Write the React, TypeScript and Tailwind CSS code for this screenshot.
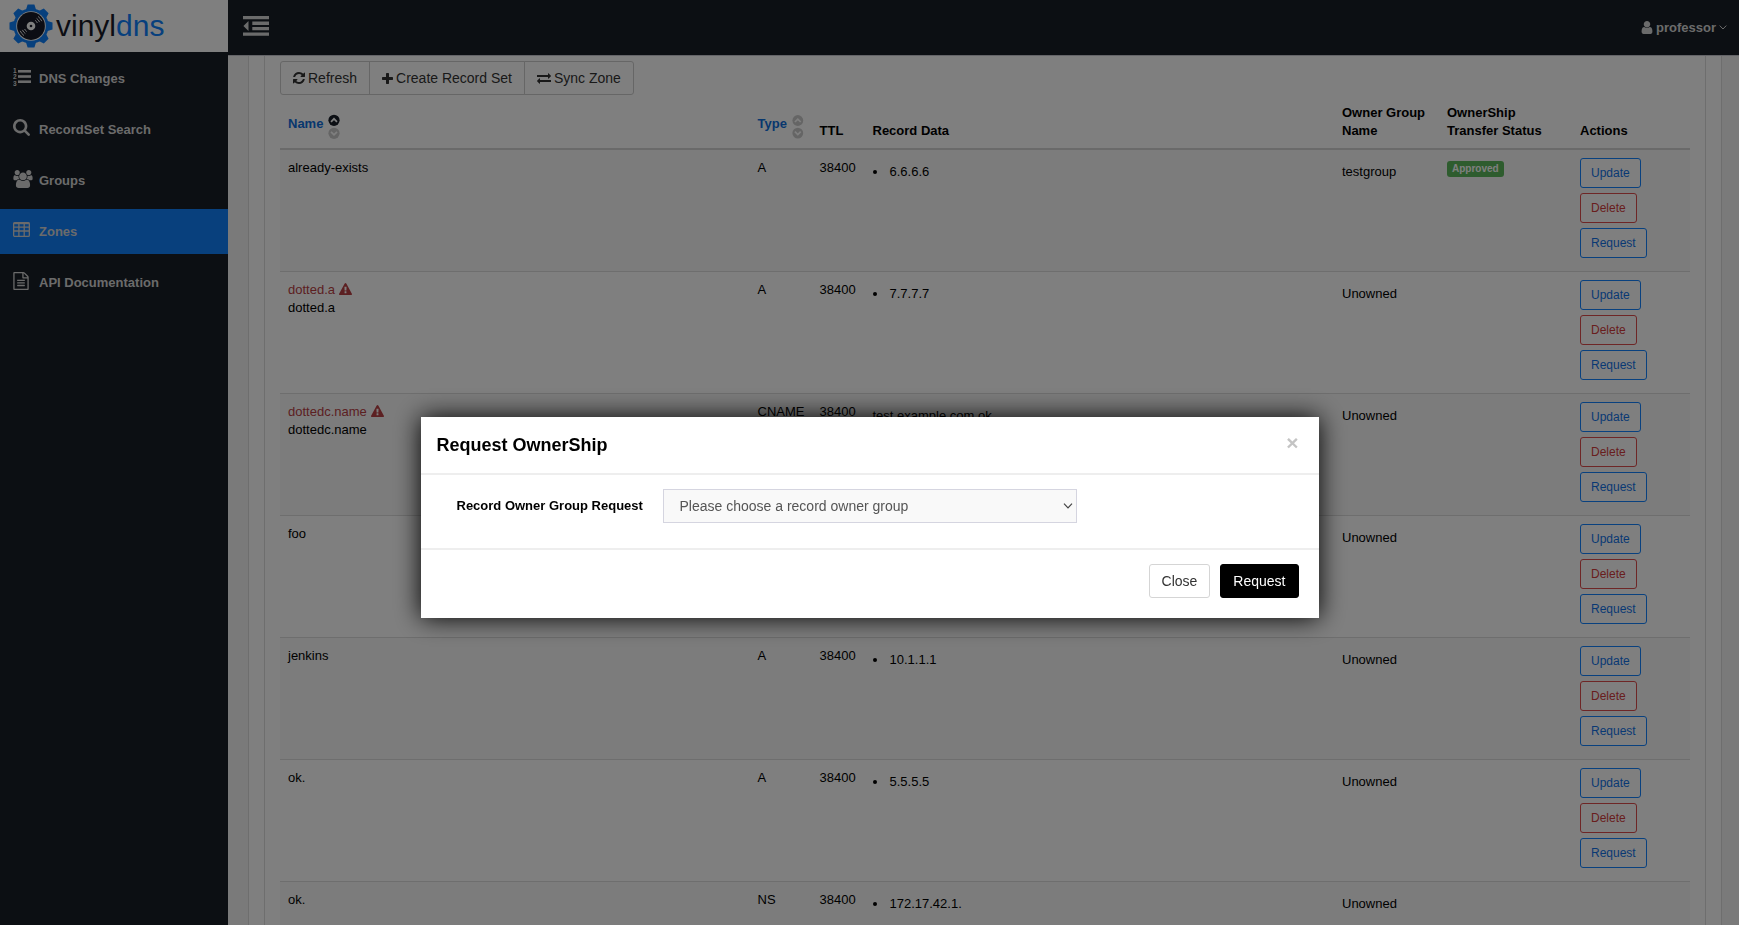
import type { ReactNode } from "react";

const paths = {
  search:
    "M1216 832q0-185-131.5-316.5t-316.5-131.5-316.5 131.5-131.5 316.5 131.5 316.5 316.5 131.5 316.5-131.5 131.5-316.5zm512 832q0 52-38 90t-90 38q-54 0-90-38l-343-342q-179 124-399 124-143 0-273.5-55.5t-225-150-150-225-55.5-273.5 55.5-273.5 150-225 225-150 273.5-55.5 273.5 55.5 225 150 150 225 55.5 273.5q0 220-124 399l343 343q37 37 37 90z",
  plus: "M1600 736v192q0 40-28 68t-68 28h-416v416q0 40-28 68t-68 28h-192q-40 0-68-28t-28-68v-416h-416q-40 0-68-28t-28-68v-192q0-40 28-68t68-28h416v-416q0-40 28-68t68-28h192q40 0 68 28t28 68v416h416q40 0 68 28t28 68z",
  refresh:
    "M1639 1056q0 5-1 7-64 268-268 434.5t-478 166.5q-146 0-282.5-55t-243.5-157l-129 129q-19 19-45 19t-45-19-19-45v-448q0-26 19-45t45-19h448q26 0 45 19t19 45-19 45l-137 137q71 66 161 102t187 36q134 0 250-65t186-179q11-17 53-117 8-23 30-23h192q13 0 22.5 9.5t9.5 22.5zm25-800v448q0 26-19 45t-45 19h-448q-26 0-45-19t-19-45 19-45l138-138q-148-137-349-137-134 0-250 65t-186 179q-11 17-53 117-8 23-30 23h-199q-13 0-22.5-9.5t-9.5-22.5v-7q65-268 270-434.5t480-166.5q146 0 284 55.5t245 156.5l130-129q19-19 45-19t45 19 19 45z",
  exchange:
    "M1792 1184v192q0 13-9.5 22.5t-22.5 9.5h-1376v192q0 13-9.5 22.5t-22.5 9.5q-12 0-24-10l-319-320q-9-9-9-22 0-14 9-23l320-320q9-9 23-9 13 0 22.5 9.5t9.5 22.5v192h1376q13 0 22.5 9.5t9.5 22.5zm0-544q0 14-9 23l-320 320q-9 9-23 9-13 0-22.5-9.5t-9.5-22.5v-192h-1376q-13 0-22.5-9.5t-9.5-22.5v-192q0-13 9.5-22.5t22.5-9.5h1376v-192q0-14 9-23t23-9q12 0 24 10l319 319q9 9 9 23z",
  warning:
    "M1024 1375v-190q0-14-9.5-23.5t-22.5-9.5h-192q-13 0-22.5 9.5t-9.5 23.5v190q0 14 9.5 23.5t22.5 9.5h192q13 0 22.5-9.5t9.5-23.5zm-2-374l18-459q0-12-10-19-13-11-24-11h-220q-11 0-24 11-10 7-10 21l17 457q0 10 10 16.5t24 6.5h185q14 0 23.5-6.5t10.5-16.5zm-14-934l768 1408q35 63-2 126-17 29-46.5 46t-63.5 17h-1536q-34 0-63.5-17t-46.5-46q-37-63-2-126l768-1408q17-31 47-49t65-18 65 18 47 49z",
  users:
    "M529 896q-162 5-265 128h-134q-82 0-138-40.5t-56-118.5q0-353 124-353 6 0 43.5 21t97.5 42.5 119 21.5q67 0 133-23-5 37-5 66 0 139 81 256zm1071 637q0 120-73 189.5t-194 69.5h-874q-121 0-194-69.5t-73-189.5q0-53 3.5-103.5t14-109 26.5-108.5 43-97.5 62-81 85.5-53.5 111.5-20q10 0 43 21.5t73 48 107 48 135 21.5 135-21.5 107-48 73-48 43-21.5q61 0 111.5 20t85.5 53.5 62 81 43 97.5 26.5 108.5 14 109 3.5 103.5zm-1024-1277q0 106-75 181t-181 75-181-75-75-181 75-181 181-75 181 75 75 181zm704 384q0 159-112.5 271.5t-271.5 112.5-271.5-112.5-112.5-271.5 112.5-271.5 271.5-112.5 271.5 112.5 112.5 271.5zm576 225q0 78-56 118.5t-138 40.5h-134q-103-123-265-128 81-117 81-256 0-29-5-66 66 23 133 23 59 0 119-21.5t97.5-42.5 43.5-21q124 0 124 353zm-128-609q0 106-75 181t-181 75-181-75-75-181 75-181 181-75 181 75 75 181z",
  user: "M1536 1399q0 109-62.5 187t-150.5 78h-854q-88 0-150.5-78t-62.5-187q0-85 8.5-160.5t31.5-152 58.5-131 94-89 134.5-34.5q131 128 313 128t313-128q76 0 134.5 34.5t94 89 58.5 131 31.5 152 8.5 160.5zm-256-887q0 159-112.5 271.5t-271.5 112.5-271.5-112.5-112.5-271.5 112.5-271.5 271.5-112.5 271.5 112.5 112.5 271.5z",
  file: "M1596 380q28 28 48 76t20 88v1152q0 40-28 68t-68 28h-1344q-40 0-68-28t-28-68v-1600q0-40 28-68t68-28h896q40 0 88 20t76 48zm-444-244v376h376q-10-29-22-41l-313-313q-12-12-41-22zm384 1528v-1024h-416q-40 0-68-28t-28-68v-416h-768v1536h1280zm-1024-864q0-14 9-23t23-9h704q14 0 23 9t9 23v64q0 14-9 23t-23 9h-704q-14 0-23-9t-9-23v-64zm736 224q14 0 23 9t9 23v64q0 14-9 23t-23 9h-704q-14 0-23-9t-9-23v-64q0-14 9-23t23-9h704zm0 256q14 0 23 9t9 23v64q0 14-9 23t-23 9h-704q-14 0-23-9t-9-23v-64q0-14 9-23t23-9h704z",
};

function Icon({ d, box = "0 0 1792 1792", className }: { d: string; box?: string; className: string }) {
  return (
    <svg viewBox={box} className={className} fill="currentColor" aria-hidden="true">
      <path d={d} />
    </svg>
  );
}

function ListIcon() {
  return (
    <svg viewBox="0 0 18 18" className="h-[18px] w-[18px]" fill="currentColor" aria-hidden="true">
      <rect x="5" y="2" width="13" height="2.6" />
      <rect x="5" y="7.2" width="13" height="2.6" />
      <rect x="5" y="12.4" width="13" height="2.6" />
      <text x="0" y="5" fontSize="6.5" fontWeight="700">1</text>
      <text x="0" y="11.4" fontSize="6.5" fontWeight="700">2</text>
      <text x="0" y="17.8" fontSize="6.5" fontWeight="700">3</text>
    </svg>
  );
}

function TableIcon() {
  return (
    <svg viewBox="0 0 17 15" className="h-[15px] w-[17px]" fill="none" stroke="currentColor" strokeWidth="1.3" aria-hidden="true">
      <rect x="0.65" y="0.65" width="15.7" height="13.7" rx="1.2" />
      <path d="M0.6 1.3H16.4" strokeWidth="1.8" />
      <path d="M0.6 5.2H16.4M0.6 9H16.4M5.9 1V14.4M11.2 1V14.4" />
    </svg>
  );
}

function OutdentIcon() {
  return (
    <svg viewBox="0 0 26 20" className="h-5 w-[26px]" fill="currentColor" aria-hidden="true">
      <path d="M0 0H26V3.3H0zM9.3 5.6H26V8.9H9.3zM9.3 11H26V14.3H9.3zM0 16.4H26V19.7H0zM0.4 10L5.5 5V15z" />
    </svg>
  );
}

function SortIcons({ asc }: { asc?: boolean }) {
  return (
    <svg viewBox="0 0 12 26" className="h-[26px] w-3" fill="none" aria-hidden="true">
      <circle cx="6" cy="6.3" r="5.6" fill={asc ? "#181e28" : "#cbcbcb"} />
      <path d="M3 7.8L6 4.8L9 7.8" stroke="#ffffff" strokeWidth="1.7" />
      <circle cx="6" cy="19.3" r="5.6" fill="#cbcbcb" />
      <path d="M3 17.8L6 20.8L9 17.8" stroke="#ffffff" strokeWidth="1.7" />
    </svg>
  );
}

const teeth = [0, 45, 90, 135, 180, 225, 270, 315];

function Logo() {
  return (
    <a href="#home" aria-label="vinyldns" className="flex h-[52px] items-center gap-[3px] bg-white pl-[9px]">
      <svg viewBox="-22 -22 44 44" className="h-11 w-11 shrink-0" aria-hidden="true">
        <g fill="#0f80fb">
          <circle r="17.6" />
          {teeth.map((a) => (
            <path key={a} d="M-5.4 -15L-3.4 -21.5H3.4L5.4 -15z" transform={`rotate(${a})`} />
          ))}
        </g>
        <circle r="14.8" fill="#ffffff" />
        <circle r="13.9" fill="#181a28" />
        <circle r="4.3" fill="#ffffff" />
        <circle r="1.3" fill="#181a28" />
        <g fill="none" stroke="#ffffff" strokeWidth="0.9">
          <path d="M4.2 -5.6A7 7 0 0 1 6.4 -3M5.6 -7.6A9.4 9.4 0 0 1 8.6 -3.9M7 -9.6A11.8 11.8 0 0 1 10.8 -4.8" />
          <path d="M-4.2 5.6A7 7 0 0 1 -6.4 3M-5.6 7.6A9.4 9.4 0 0 1 -8.6 3.9M-7 9.6A11.8 11.8 0 0 1 -10.8 4.8" />
        </g>
      </svg>
      <span className="text-[30px] leading-[44px] text-[#181a28]">
        vinyl<span className="text-[#0f80fb]">dns</span>
      </span>
    </a>
  );
}

const navItems: { label: string; icon: ReactNode; active?: boolean }[] = [
  { label: "DNS Changes", icon: <ListIcon /> },
  { label: "RecordSet Search", icon: <Icon d={paths.search} box="64 128 1664 1664" className="h-[17px] w-[17px]" /> },
  { label: "Groups", icon: <Icon d={paths.users} box="-64 0 1920 1792" className="h-[18px] w-5" /> },
  { label: "Zones", icon: <TableIcon />, active: true },
  { label: "API Documentation", icon: <Icon d={paths.file} box="128 0 1536 1792" className="h-[18px] w-4" /> },
];

interface RecordRow {
  name: string;
  dotted?: boolean;
  type: string;
  data: string;
  plain?: boolean;
  owner: string;
  status?: string;
  readOnly?: boolean;
}

const records: RecordRow[] = [
  { name: "already-exists", type: "A", data: "6.6.6.6", owner: "testgroup", status: "Approved" },
  { name: "dotted.a", dotted: true, type: "A", data: "7.7.7.7", owner: "Unowned" },
  { name: "dottedc.name", dotted: true, type: "CNAME", data: "test.example.com.ok.", plain: true, owner: "Unowned" },
  { name: "foo", type: "A", data: "2.2.2.2", owner: "Unowned" },
  { name: "jenkins", type: "A", data: "10.1.1.1", owner: "Unowned" },
  { name: "ok.", type: "A", data: "5.5.5.5", owner: "Unowned" },
  { name: "ok.", type: "NS", data: "172.17.42.1.", owner: "Unowned", readOnly: true },
];

const actionBase = "h-[30px] rounded-[3px] border bg-white px-[10px] text-xs";
const textCell = "px-2 pt-[9px] pb-2";
const offsetCell = "px-2 pt-[13px] pb-2";

function Row({ r }: { r: RecordRow }) {
  return (
    <tr className="h-[122px] border-b border-[#dcdcdc] align-top odd:bg-[#f9f9f9]">
      <td className={textCell}>
        {r.dotted && (
          <div className="flex items-center gap-1 text-[#b94044]">
            {r.name}
            <Icon d={paths.warning} className="h-[13px] w-[13px]" />
          </div>
        )}
        <div>{r.name}</div>
      </td>
      <td className={textCell}>{r.type}</td>
      <td className={textCell}>38400</td>
      <td className={offsetCell}>
        {r.plain ? (
          r.data
        ) : (
          <ul>
            <li className="flex items-center gap-[13px] before:h-1 before:w-1 before:rounded-full before:bg-black">
              {r.data}
            </li>
          </ul>
        )}
      </td>
      <td className={offsetCell}>{r.owner}</td>
      <td className="px-2 py-[11px]">
        {r.status && (
          <span className="block w-fit rounded-[3px] bg-[#5cb85c] px-[5px] text-[10px] leading-4 font-bold text-white">
            {r.status}
          </span>
        )}
      </td>
      <td className="p-2">
        {!r.readOnly && (
          <div className="flex flex-col items-start gap-[5px]">
            <button type="button" className={`${actionBase} border-[#1283ff] text-[#1273e8]`}>Update</button>
            <button type="button" className={`${actionBase} border-[#dc4c4c] text-[#d23c3c]`}>Delete</button>
            <button type="button" className={`${actionBase} border-[#1283ff] text-[#1273e8]`}>Request</button>
          </div>
        )}
      </td>
    </tr>
  );
}

const toolButton = "flex h-[34px] items-center gap-[3px] border border-[#cccccc] bg-white px-3 text-sm text-[#333333]";

function RequestDialog() {
  return (
    <div className="fixed inset-0 flex items-start justify-center bg-black/50 pt-[417px]">
      <div
        role="dialog"
        aria-modal="true"
        aria-labelledby="dialog-title"
        className="w-[898px] max-w-full bg-white shadow-[0_0_24px_#000000]"
      >
        <div className="flex items-start justify-between border-b-2 border-[#eeeeee] py-[18px] pr-5 pl-4">
          <h2 id="dialog-title" className="text-lg leading-5 font-bold text-black">Request OwnerShip</h2>
          <button type="button" aria-label="Close dialog" className="text-[21px] leading-4 font-bold text-[#c4c4c4]">
            ×
          </button>
        </div>
        <form>
          <div className="flex h-[73px] items-start pt-[14px] pl-9">
            <label htmlFor="owner-group" className="w-[206px] text-[13px] leading-[34px] font-bold text-black">
              Record Owner Group Request
            </label>
            <div className="relative w-[414px] text-[#555555]">
              <select
                id="owner-group"
                className="h-[34px] w-full appearance-none rounded-none border border-[#d5d5e0] bg-[#f9f9f9] px-4 text-sm"
              >
                <option>Please choose a record owner group</option>
              </select>
              <svg
                viewBox="0 0 10 6"
                className="pointer-events-none absolute top-[14px] right-1 h-[6px] w-[10px]"
                fill="none"
                stroke="#444444"
                strokeWidth="1.2"
                aria-hidden="true"
              >
                <path d="M1 0.7L5 4.9L9 0.7" />
              </svg>
            </div>
          </div>
          <div className="flex justify-end gap-[10px] border-t-2 border-[#eeeeee] px-5 pt-[14px] pb-5">
            <button type="button" className="h-[34px] rounded-[3px] border border-[#d5d5d5] bg-white px-3 text-sm text-[#333333]">
              Close
            </button>
            <button type="submit" className="h-[34px] rounded-[3px] border border-black bg-black px-3 text-sm text-white">
              Request
            </button>
          </div>
        </form>
      </div>
    </div>
  );
}

export default function App() {
  return (
    <div className="flex h-screen overflow-hidden bg-[#f5f5f5] font-['Liberation_Sans',Arial,sans-serif] text-[13px] leading-[18px] text-black">
      <aside className="w-[228px] shrink-0 bg-[#181e26]">
        <Logo />
        <nav className="flex flex-col gap-[6px] pt-1">
          {navItems.map((item) => (
            <a
              key={item.label}
              href="#nav"
              className={
                item.active
                  ? "flex h-[45px] items-center bg-[#1080fb] pl-[13px] font-bold text-[#d6d6d6]"
                  : "flex h-[45px] items-center pl-[13px] font-bold text-[#d6d6d6]"
              }
            >
              <span className="w-[26px] pb-1">{item.icon}</span>
              {item.label}
            </a>
          ))}
        </nav>
      </aside>

      <div className="flex min-w-0 grow flex-col">
        <header className="flex h-[55px] shrink-0 items-center justify-between bg-[#181e26] pr-3 pl-[15px] text-[#d6d6d6]">
          <button type="button" aria-label="Toggle menu" className="pb-1">
            <OutdentIcon />
          </button>
          <button type="button" className="flex items-center gap-[3px] font-bold">
            <Icon d={paths.user} box="256 128 1280 1536" className="h-[13px] w-3" />
            professor
            <svg viewBox="0 0 8 5" className="h-[5px] w-2" fill="none" stroke="currentColor" strokeWidth="1" aria-hidden="true">
              <path d="M0.7 0.6L4 4L7.3 0.6" />
            </svg>
          </button>
        </header>

        <main className="min-h-0 grow overflow-hidden border-t border-[#c8c8d0] pr-[17px] pl-5">
          <div className="border-x border-[#dddddd] bg-white px-[15px]">
            <div className="border-x border-[#dddddd] px-[15px] pt-[5px]">
              <div className="flex">
                <button type="button" className={`${toolButton} rounded-l-[3px]`}>
                  <Icon d={paths.refresh} box="128 128 1536 1536" className="h-3 w-3" />
                  Refresh
                </button>
                <button type="button" className={`${toolButton} -ml-px`}>
                  <Icon d={paths.plus} box="192 128 1408 1408" className="h-[11px] w-[11px]" />
                  Create Record Set
                </button>
                <button type="button" className={`${toolButton} -ml-px rounded-r-[3px]`}>
                  <Icon d={paths.exchange} className="h-[14px] w-[14px]" />
                  Sync Zone
                </button>
              </div>

              <table className="mt-px w-full table-fixed border-collapse text-left">
                <colgroup>
                  <col />
                  <col className="w-[62px]" />
                  <col className="w-[53px]" />
                  <col />
                  <col className="w-[105px]" />
                  <col className="w-[133px]" />
                  <col className="w-[118px]" />
                </colgroup>
                <thead>
                  <tr className="border-b-2 border-[#d4d4d4] align-bottom">
                    <th className="p-2">
                      <a href="#name" className="flex items-start gap-[5px] leading-5 text-[#0f6fdc]">
                        Name <SortIcons asc />
                      </a>
                    </th>
                    <th className="p-2">
                      <a href="#type" className="flex items-start gap-[5px] leading-5 text-[#0f6fdc]">
                        Type <SortIcons />
                      </a>
                    </th>
                    <th className="p-2">TTL</th>
                    <th className="p-2">Record Data</th>
                    <th className="p-2">Owner Group Name</th>
                    <th className="p-2">OwnerShip Transfer Status</th>
                    <th className="p-2">Actions</th>
                  </tr>
                </thead>
                <tbody>
                  {records.map((r, i) => (
                    <Row key={i} r={r} />
                  ))}
                </tbody>
              </table>
            </div>
          </div>
        </main>
      </div>

      <RequestDialog />
    </div>
  );
}
